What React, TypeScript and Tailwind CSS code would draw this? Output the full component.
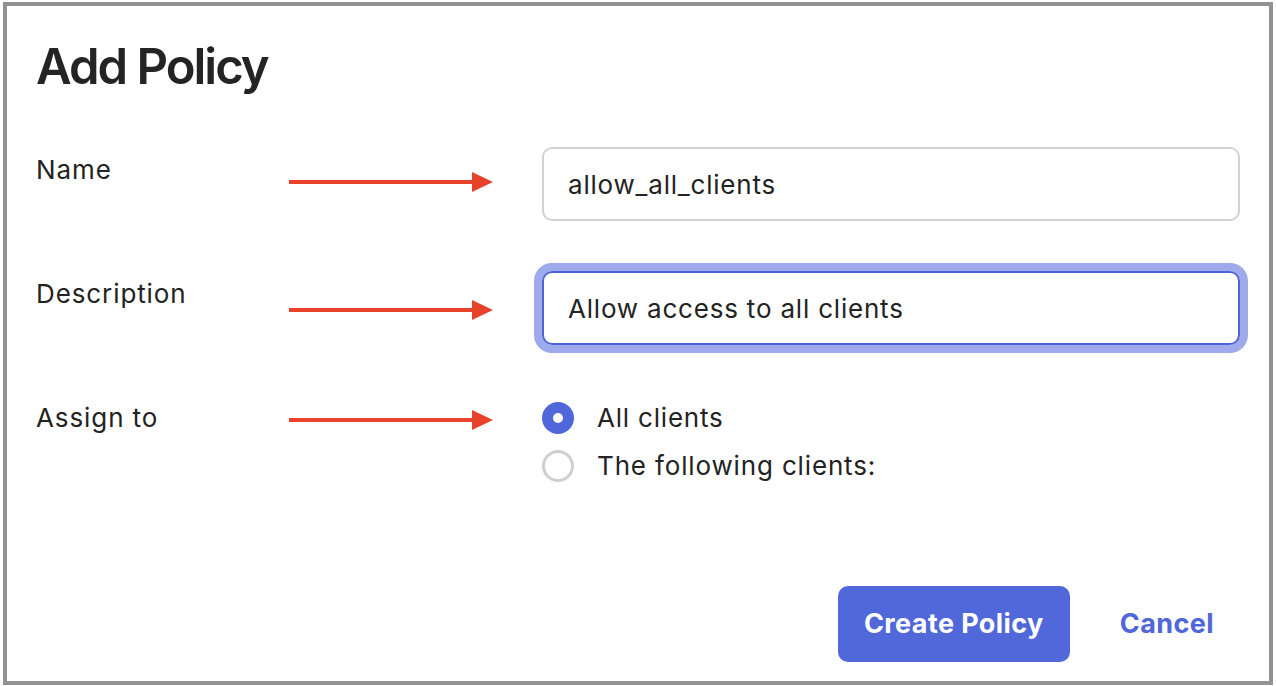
import React from "react";

function Arrow() {
  return (
    <svg width="204" height="22" viewBox="0 0 204 22" className="block">
      <rect x="0" y="9" width="186" height="4" fill="#e8432a" />
      <polygon points="183,1 204,11 183,21" fill="#e8432a" />
    </svg>
  );
}

export default function App() {
  return (
    <div
      className="w-[1276px] h-[686px] bg-white pt-[2px] pl-[3px] text-[#232323]"
      style={{ fontFamily: "Inter, 'Noto Sans', sans-serif" }}
    >
      <div className="w-[1270px] h-[683px] border-4 border-[#929292] pl-[30px] pr-[29px] flex flex-col">
        <h1 className="mt-[29px] -ml-[1px] text-[49px] leading-[64px] font-semibold tracking-[-2px] text-[#242424]">
          Add Policy
        </h1>

        <div className="mt-[48px] grid grid-cols-[252px_253px_698px]">
          {/* Row 1 */}
          <div className="-ml-[1px] pt-[7px] text-[26px] leading-[32px] tracking-[0.9px]">Name</div>
          <div className="pt-[24px]">
            <Arrow />
          </div>
          <div className="h-[74px] rounded-[10px] border-2 border-[#d2d2d2] flex items-center px-[24px] text-[26px] tracking-[0.8px]">
            allow_all_clients
          </div>

          {/* Row 2 */}
          <div className="-ml-[1px] mt-[50px] pt-[7px] text-[26px] leading-[32px] tracking-[0.9px]">Description</div>
          <div className="mt-[50px] pt-[28px]">
            <Arrow />
          </div>
          <div className="mt-[50px] h-[74px] rounded-[10px] border-2 border-[#4d63d6] ring-[8px] ring-[#9eaaec] flex items-center px-[24px] text-[26px] tracking-[0.8px]">
            Allow access to all clients
          </div>

          {/* Row 3 */}
          <div className="-ml-[1px] mt-[57px] text-[26px] leading-[32px] tracking-[0.9px]">Assign to</div>
          <div className="mt-[57px] pt-[7px]">
            <Arrow />
          </div>
          <div className="mt-[57px] flex flex-col gap-[16px]">
            <div className="flex items-center gap-[23px] text-[26px] leading-[32px] tracking-[0.8px]">
              <span className="w-[32px] h-[32px] rounded-full bg-[#4f67d9] flex items-center justify-center">
                <span className="w-[10px] h-[10px] rounded-full bg-white" />
              </span>
              <span>All clients</span>
            </div>
            <div className="flex items-center gap-[23px] text-[26px] leading-[32px] tracking-[0.85px]">
              <span className="w-[32px] h-[32px] rounded-full border-[3px] border-[#cfcfcf] bg-white" />
              <span>The following clients:</span>
            </div>
          </div>
        </div>

        <div className="mt-auto mb-[19px] flex items-center justify-end pr-[26px] gap-[50px]">
          <button className="w-[232px] h-[76px] rounded-[10px] bg-[#5068d9] text-white text-[27px] font-bold tracking-[0.4px]">
            Create Policy
          </button>
          <button className="text-[27px] font-bold text-[#4f67d8] tracking-[0.4px]">Cancel</button>
        </div>
      </div>
    </div>
  );
}
